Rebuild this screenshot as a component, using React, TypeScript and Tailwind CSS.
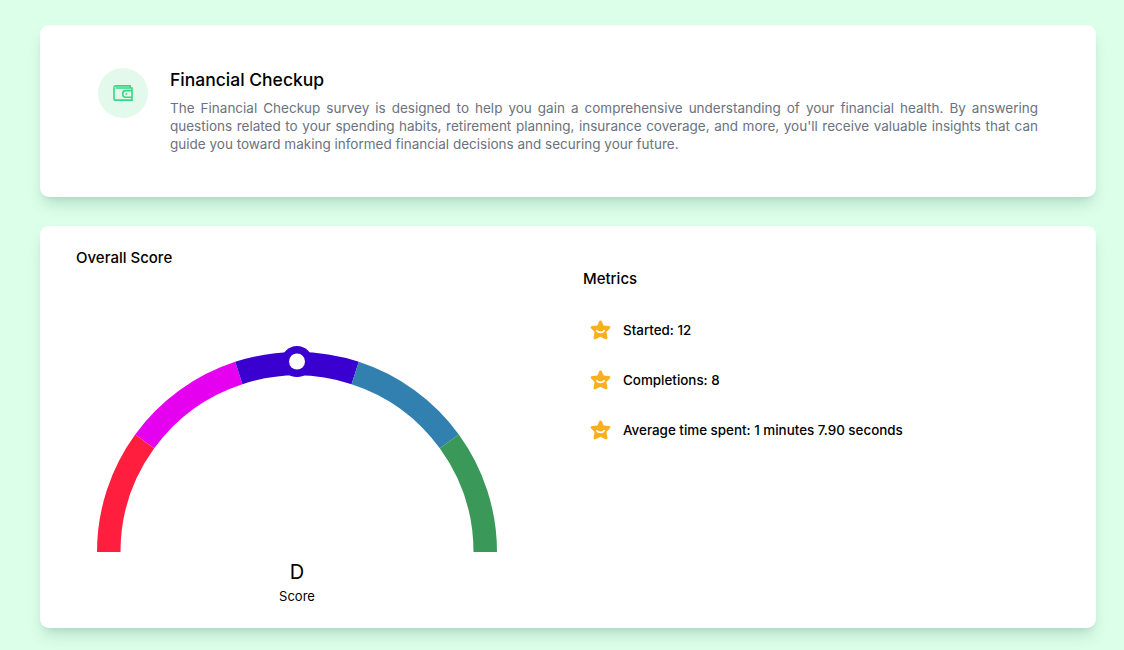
const segments = [
  { color: '#FF1E3E', from: 180, to: 144 },
  { color: '#E600F0', from: 144, to: 108 },
  { color: '#3A00D0', from: 108, to: 72 },
  { color: '#3180B0', from: 72, to: 36 },
  { color: '#3A9858', from: 36, to: 0 },
];

const CX = 200;
const CY = 206;
const OUTER = 200;
const INNER = 176.5;

function point(radius: number, deg: number) {
  const rad = (deg * Math.PI) / 180;
  return `${(CX + radius * Math.cos(rad)).toFixed(2)} ${(CY - radius * Math.sin(rad)).toFixed(2)}`;
}

function arc(from: number, to: number) {
  return `M${point(OUTER, from)} A${OUTER} ${OUTER} 0 0 1 ${point(OUTER, to)} L${point(INNER, to)} A${INNER} ${INNER} 0 0 0 ${point(INNER, from)} Z`;
}

function Gauge() {
  return (
    <svg width="400" height="206" viewBox="0 0 400 206" className="block">
      {segments.map((s) => (
        <path key={s.color} d={arc(s.from, s.to)} fill={s.color} />
      ))}
      <circle cx="200" cy="15.5" r="15.5" fill="#3A00D0" />
      <circle cx="200" cy="15.5" r="8" fill="#fff" />
    </svg>
  );
}

function WalletIcon() {
  return (
    <svg width="20" height="16" viewBox="0 0 20 16" fill="none" stroke="#34D986" strokeWidth="1.6">
      <path d="M1 2.6C1 1.5 1.7 0.9 2.8 0.9H17.2V3" />
      <path d="M1 2.6V14C1 14.7 1.4 15.1 2.1 15.1H19V3H2.6" />
      <path d="M19 5.6H12.6C10.9 5.6 9.7 7 9.7 8.9C9.7 10.8 10.9 12.2 12.6 12.2H19" />
      <circle cx="13.4" cy="8.9" r="0.9" fill="#34D986" stroke="none" />
    </svg>
  );
}

function StarIcon() {
  return (
    <svg width="21" height="20" viewBox="0 0 21 20" className="shrink-0">
      <path
        d="M10.5 0.5C11.2 0.5 11.6 1 12 1.8L13.6 5.4L18.6 6C20.3 6.2 20.9 7.4 19.8 8.6L16.4 12L17.4 17.2C17.7 19 16.6 19.8 15 19L10.5 16.8L6 19C4.4 19.8 3.3 19 3.6 17.2L4.6 12L1.2 8.6C0.1 7.4 0.7 6.2 2.4 6L7.4 5.4L9 1.8C9.4 1 9.8 0.5 10.5 0.5Z"
        fill="#FBAF1E"
      />
      <path d="M6.8 10.6C8 13 13 13 14.2 10.6" fill="none" stroke="#fff" strokeWidth="1.6" strokeLinecap="round" />
    </svg>
  );
}

const metrics = ['Started: 12', 'Completions: 8', 'Average time spent: 1 minutes 7.90 seconds'];

export default function App() {
  return (
    <div className="min-h-screen bg-[#DCFFE9] pt-[25px] pr-7 pb-[22px] pl-10 font-['Inter',sans-serif] text-black">
      <div className="flex h-[172px] gap-[22px] rounded-[9px] bg-white pt-[43px] pr-[58px] pl-[58px] shadow-[0_10px_15px_-3px_rgba(0,70,60,0.17),0_4px_6px_-4px_rgba(0,70,60,0.12)]">
        <div className="flex h-[50px] w-[50px] shrink-0 items-center justify-center rounded-full bg-[#E3F9EC]">
          <WalletIcon />
        </div>
        <div>
          <h1 className="text-[17.5px] leading-6 font-medium">Financial Checkup</h1>
          <p className="mt-[7px] text-justify text-[13.5px] leading-[18px] text-[#6B7280]">
            The Financial Checkup survey is designed to help you gain a comprehensive understanding of your financial health. By answering questions related to your spending habits, retirement planning, insurance coverage, and more, you'll receive valuable insights that can guide you toward making informed financial decisions and securing your future.
          </p>
        </div>
      </div>

      <div className="mt-[29px] flex h-[402px] rounded-[9px] bg-white pl-9 shadow-[0_10px_15px_-3px_rgba(0,70,60,0.17),0_4px_6px_-4px_rgba(0,70,60,0.12)]">
        <div className="w-[507px] shrink-0 pt-[22px]">
          <h2 className="text-[15px] leading-5 font-medium">Overall Score</h2>
          <div className="mt-[78px] ml-[21px] w-[400px]">
            <Gauge />
            <div className="mt-[8px] text-center text-xl leading-6">D</div>
            <div className="mt-[2px] text-center text-[13px] leading-5">Score</div>
          </div>
        </div>
        <div className="pt-[43px]">
          <h2 className="text-[15px] leading-5 font-medium">Metrics</h2>
          <div className="mt-[31px] flex flex-col gap-[30px] pl-[7px]">
            {metrics.map((m) => (
              <div key={m} className="flex h-5 items-center gap-[12px] text-[13.4px] font-[450]">
                <StarIcon />
                <span>{m}</span>
              </div>
            ))}
          </div>
        </div>
      </div>
    </div>
  );
}
